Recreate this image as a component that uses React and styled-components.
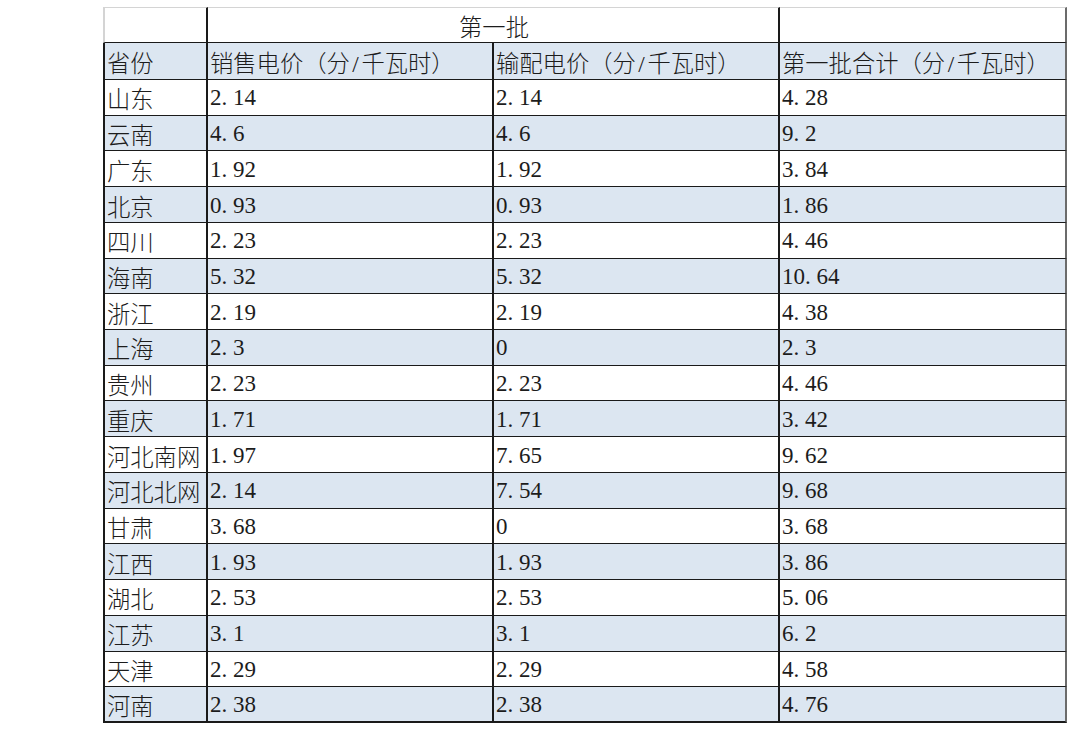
import React from "react";
import styled, { createGlobalStyle, css } from "styled-components";

const Global = createGlobalStyle`
  html, body { margin: 0; padding: 0; background: #ffffff; }
  body { font-family: "Liberation Serif", "Noto Sans CJK SC", serif; }
`;

const Page = styled.div`
  padding: 7px 0 0 103px;
`;

const Sheet = styled.div`
  display: grid;
  grid-template-columns: 105px 286px 286px 287px;
  grid-template-rows: 36px 37px repeat(18, 35.72px);
  width: 964px;
  color: #1c1c1c;
`;

const Cell = styled.div`
  box-sizing: border-box;
  display: flex;
  align-items: center;
  justify-content: ${(p) => (p.$center ? "center" : "flex-start")};
  padding: 2px 0 0 2px;
  background: ${(p) => (p.$shade ? "#dce6f1" : "#ffffff")};
  border-bottom: ${(p) => (p.$last ? "2px solid #1a1a1a" : "1px solid #1a1a1a")};
  border-right: 2px solid ${(p) => (p.$end ? "#6b6b6b" : "#1a1a1a")};
  border-left: ${(p) => (p.$first ? "2px solid #1a1a1a" : "none")};
  grid-column: ${(p) => (p.$span ? `span ${p.$span}` : "auto")};
  font-size: 22.7px;
  white-space: nowrap;
  overflow: hidden;
  ${(p) =>
    p.$top &&
    css`
      border-top: 1px solid #d4d4d4;
    `}
  ${(p) =>
    p.$top &&
    p.$first &&
    css`
      border-left: 2px solid #d4d4d4;
    `}
`;

const Han = styled.span`
  font-family: "Noto Sans CJK SC", sans-serif;
  font-weight: 300;
  font-size: 23.3px;
  display: inline-flex;
  align-items: baseline;
`;

const Paren = styled.span`
  display: inline-block;
  width: 1em;
  text-align: ${(p) => (p.$open ? "right" : "left")};
`;

const Num = styled.span`
  font-family: "Liberation Serif", serif;
  font-size: 23px;
  display: inline-flex;
`;

const Dot = styled.span`
  display: inline-block;
  width: 0.5em;
`;

const Slash = styled.span`
  font-family: "Liberation Serif", serif;
  display: inline-block;
  width: 0.5em;
  text-align: center;
`;

function Value({ v }) {
  const parts = v.split(".");
  return (
    <Num>
      {parts[0]}
      {parts.length > 1 && (
        <>
          <Dot>.</Dot>
          {parts[1]}
        </>
      )}
    </Num>
  );
}

function Label({ text }) {
  const tokens = text.split(/([（）/])/).filter(Boolean);
  return (
    <Han>
      {tokens.map((t, i) => {
        if (t === "（") return <Paren key={i} $open>（</Paren>;
        if (t === "）") return <Paren key={i}>）</Paren>;
        if (t === "/") return <Slash key={i}>/</Slash>;
        return <span key={i}>{t}</span>;
      })}
    </Han>
  );
}

const rows = [
  ["山东", "2.14", "2.14", "4.28"],
  ["云南", "4.6", "4.6", "9.2"],
  ["广东", "1.92", "1.92", "3.84"],
  ["北京", "0.93", "0.93", "1.86"],
  ["四川", "2.23", "2.23", "4.46"],
  ["海南", "5.32", "5.32", "10.64"],
  ["浙江", "2.19", "2.19", "4.38"],
  ["上海", "2.3", "0", "2.3"],
  ["贵州", "2.23", "2.23", "4.46"],
  ["重庆", "1.71", "1.71", "3.42"],
  ["河北南网", "1.97", "7.65", "9.62"],
  ["河北北网", "2.14", "7.54", "9.68"],
  ["甘肃", "3.68", "0", "3.68"],
  ["江西", "1.93", "1.93", "3.86"],
  ["湖北", "2.53", "2.53", "5.06"],
  ["江苏", "3.1", "3.1", "6.2"],
  ["天津", "2.29", "2.29", "4.58"],
  ["河南", "2.38", "2.38", "4.76"],
];

export default function App() {
  return (
    <Page>
      <Global />
      <Sheet>
        <Cell $top $first />
        <Cell $top $span={2} $center>
          <Label text="第一批" />
        </Cell>
        <Cell $top $end />

        <Cell $first $shade>
          <Label text="省份" />
        </Cell>
        <Cell $shade>
          <Label text="销售电价（分/千瓦时）" />
        </Cell>
        <Cell $shade>
          <Label text="输配电价（分/千瓦时）" />
        </Cell>
        <Cell $shade $end>
          <Label text="第一批合计（分/千瓦时）" />
        </Cell>

        {rows.map((r, i) => {
          const shade = i % 2 === 1;
          const last = i === rows.length - 1;
          return (
            <React.Fragment key={r[0]}>
              <Cell $first $shade={shade} $last={last}>
                <Label text={r[0]} />
              </Cell>
              <Cell $shade={shade} $last={last}>
                <Value v={r[1]} />
              </Cell>
              <Cell $shade={shade} $last={last}>
                <Value v={r[2]} />
              </Cell>
              <Cell $shade={shade} $last={last} $end>
                <Value v={r[3]} />
              </Cell>
            </React.Fragment>
          );
        })}
      </Sheet>
    </Page>
  );
}
